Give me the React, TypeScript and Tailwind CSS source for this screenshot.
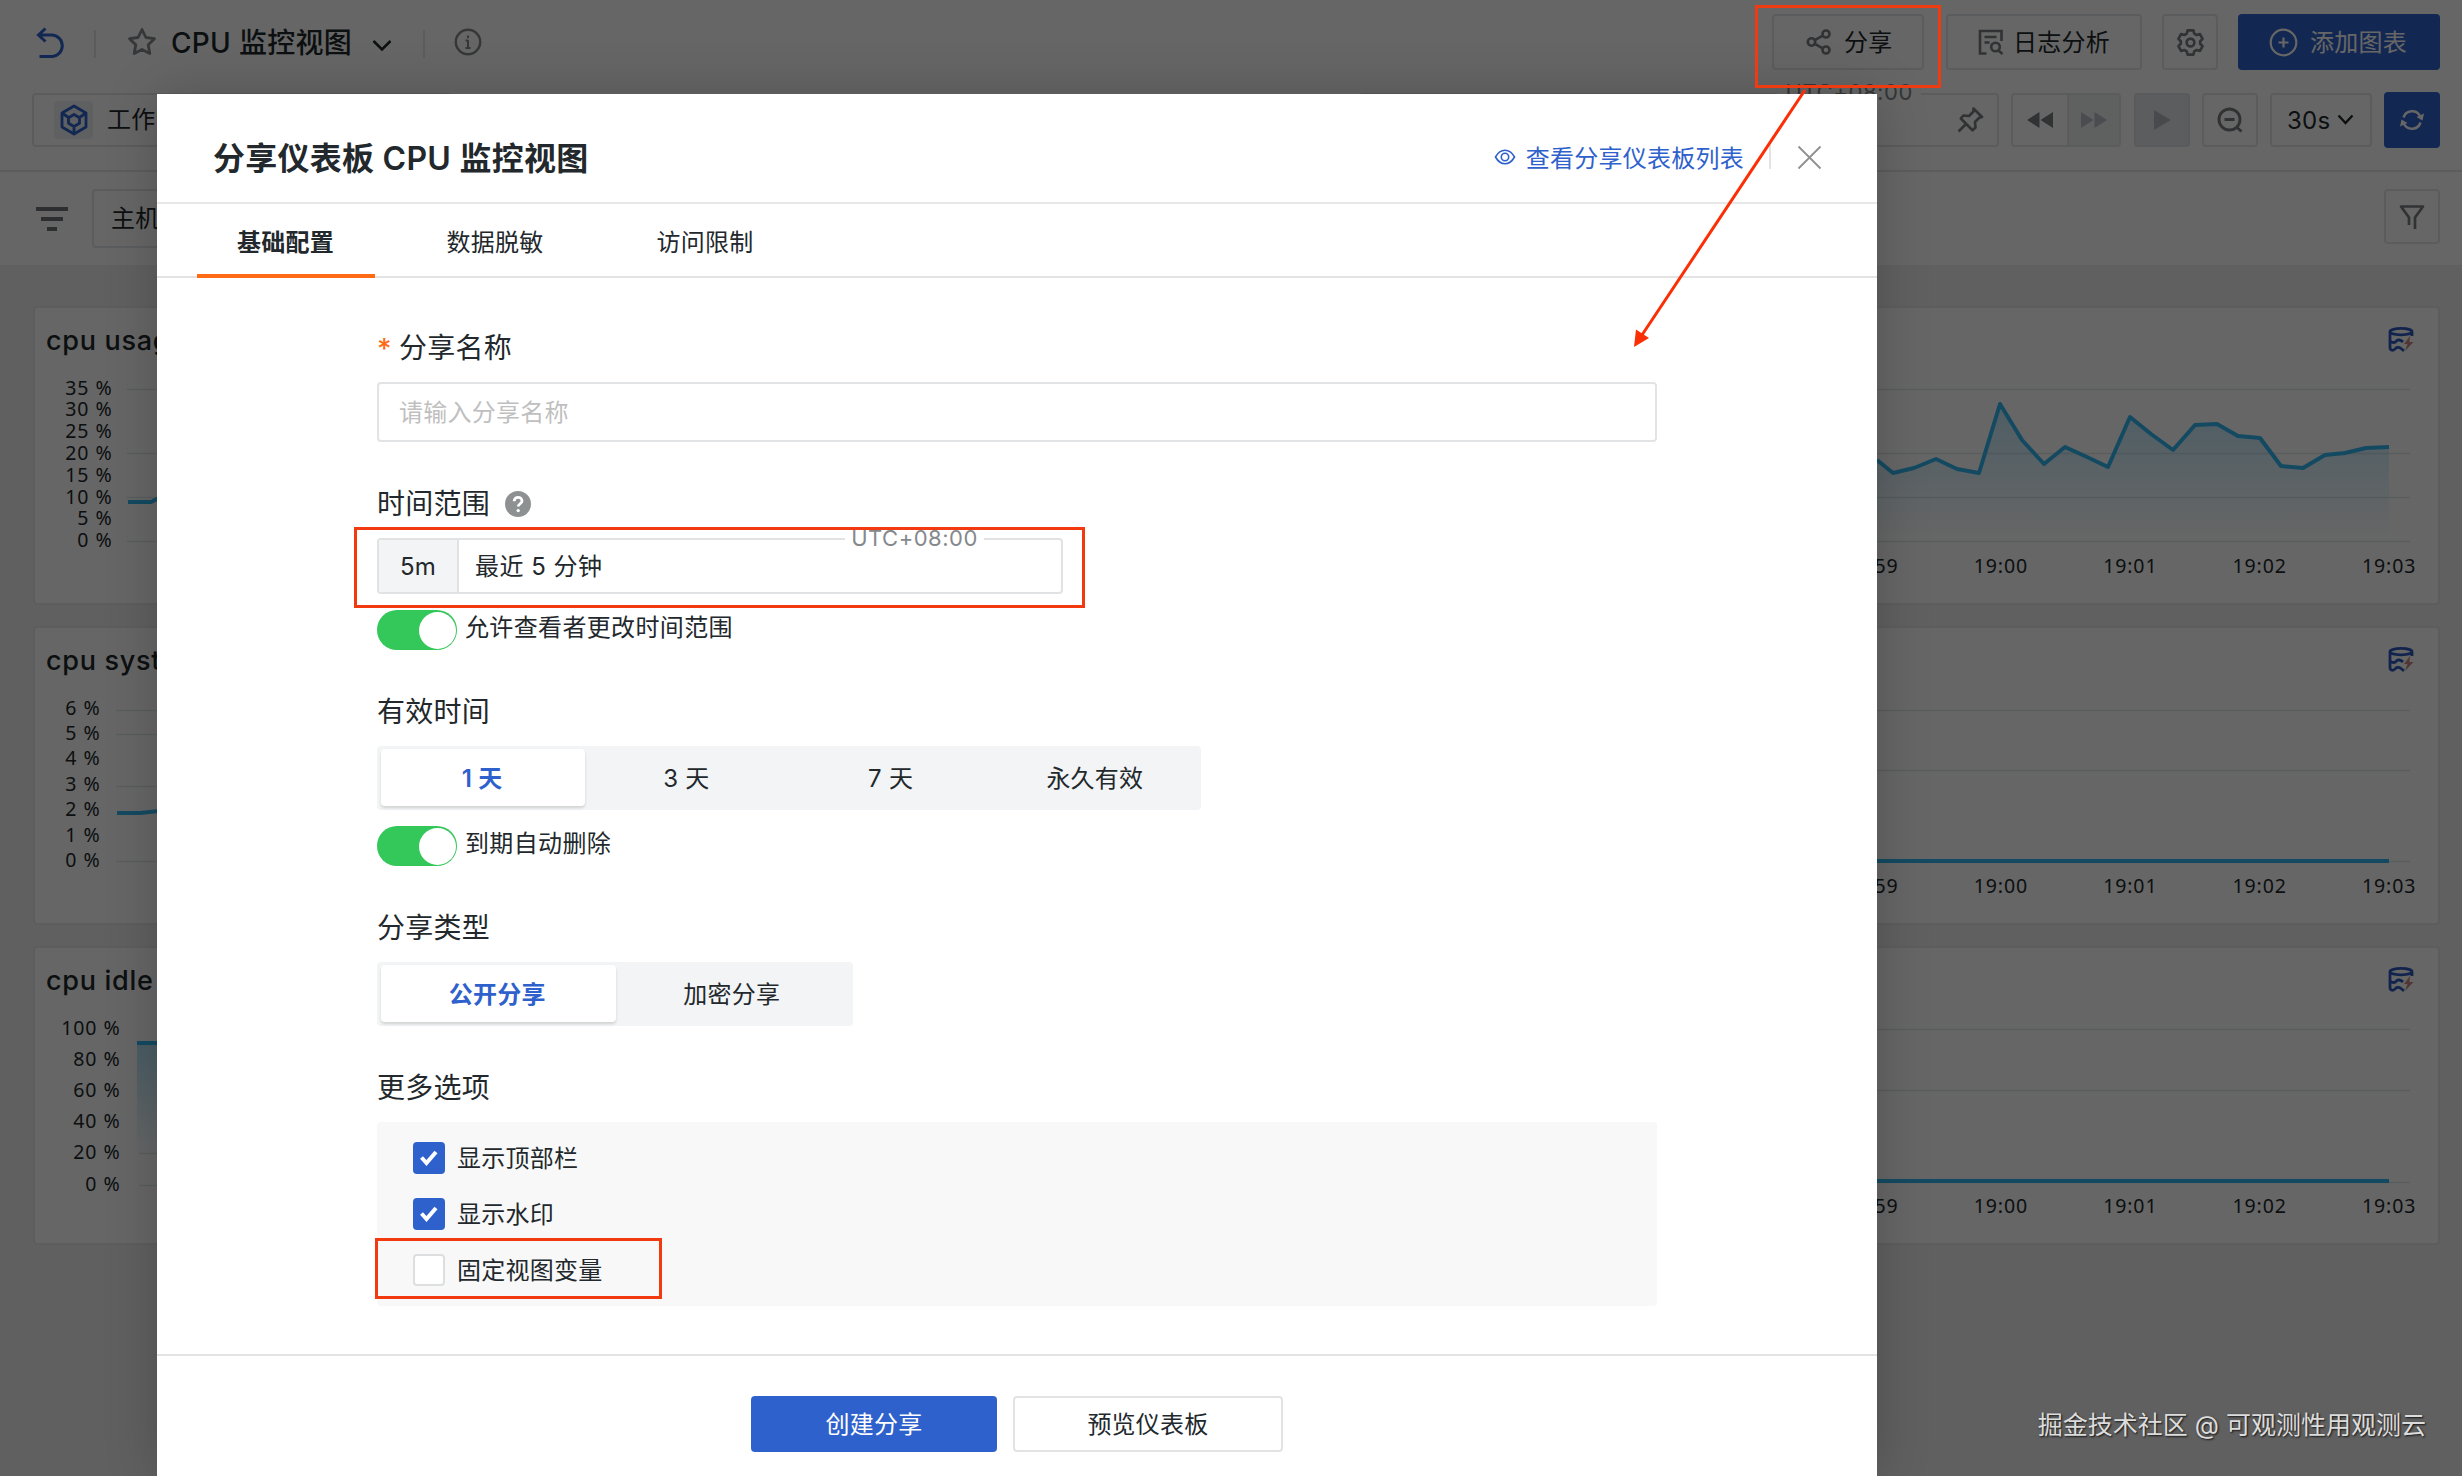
import { useState } from 'react'
import type { ReactNode } from 'react'

const LINE = '#34b8f2'

const usagePoints = [
  [629, 153], [645, 166], [666, 161], [688, 152], [709, 162], [731, 166], [752, 97], [774, 133], [796, 157],
  [817, 140], [839, 150], [860, 160], [882, 110], [903, 127], [925, 143], [947, 118], [969, 117], [990, 129],
  [1012, 131], [1033, 159], [1055, 161], [1077, 148], [1097, 146], [1118, 141], [1141, 140],
]

const leftCards = [
  {
    title: 'cpu usage',
    labels: ['35 %', '30 %', '25 %', '20 %', '15 %', '10 %', '5 %', '0 %'],
    top: 80.5, step: 21.8, right: 78.5, gridX: 93, grid: [82.5, 146.5, 190.5, 234.5],
    line: '94,195 117,195 125,191 170,180', area: false,
  },
  {
    title: 'cpu system',
    labels: ['6 %', '5 %', '4 %', '3 %', '2 %', '1 %', '0 %'],
    top: 80.5, step: 25.4, right: 66.5, gridX: 82, grid: [83.5, 107.5, 159.5, 234.5],
    line: '83,186 106,186 125,184 170,185', area: false,
  },
  {
    title: 'cpu idle',
    labels: ['100 %', '80 %', '60 %', '40 %', '20 %', '0 %'],
    top: 80.5, step: 31.2, right: 86.5, gridX: 105, grid: [206.5, 238.5],
    line: '103,96 170,96', area: true,
  },
]

const rightCards = [
  { grid: [82.5, 146.5, 190.5, 234.5], points: usagePoints },
  { grid: [83.5, 143.5, 234.5], points: [[500, 234], [1141, 234]] },
  { grid: [82.5, 143.5, 235.5], points: [[500, 234], [1141, 234]] },
]

const timeTicks = ['18:59', '19:00', '19:01', '19:02', '19:03']

function DbIcon() {
  return (
    <svg className="absolute left-[1136px] top-[19px]" width="26" height="26" viewBox="0 0 26 26" fill="none" stroke="#2f5bc0" strokeWidth="2.800">
      <ellipse cx="13" cy="4.6" rx="11" ry="3.2" />
      <path d="M2 5v15.5c0 3 3.5 3.500 5 1.500s4-2 6-.5l3 2.300" />
      <path d="M2 14c3 2.500 5.500 1.500 6.500 0s4-1.500 6.500 1M24 5v4" />
      <path d="M22 9l-6 8h3.500l-2.500 7 8.500-9h-4z" fill="#c98a80" stroke="none" />
    </svg>
  )
}

function LeftCard({ card, id }: { card: (typeof leftCards)[number]; id: string }) {
  return (
    <div className="h-[299px] bg-white border-2 border-[#e6e8ea] rounded-sm overflow-hidden">
      <svg width="1187" height="295" viewBox="1 1 1187 295" fill="none">
        <defs>
          <linearGradient id={id} x1="0" y1="0" x2="0" y2="1">
            <stop offset="0" stopColor={LINE} stopOpacity="0.35" />
            <stop offset="1" stopColor={LINE} stopOpacity="0" />
          </linearGradient>
        </defs>
        <text x="12" y="43" fontSize="27" fontWeight="500" letterSpacing="0.7" fill="#22282c">{card.title}</text>
        {card.grid.map((y) => (
          <path key={y} d={`M${card.gridX} ${y}H1160`} stroke="#e4e6e8" strokeWidth="1.5" />
        ))}
        {card.labels.map((label, i) => (
          <text
            key={label}
            x={card.right}
            y={card.top + i * card.step + 7}
            textAnchor="end"
            fontSize="19.500"
            letterSpacing="0.9"
            fill="#22282c"
            className="font-['Noto_Sans']"
          >
            {label}
          </text>
        ))}
        {card.area && <path d="M103 96H170V210H103Z" fill={`url(#${id})`} />}
        <polyline points={card.line} stroke={LINE} strokeWidth="4" />
      </svg>
    </div>
  )
}

function RightCard({ card, id }: { card: (typeof rightCards)[number]; id: string }) {
  const pts = card.points.map((p) => p.join(',')).join(' ')
  return (
    <div className="relative h-[299px] bg-white border-2 border-[#e6e8ea] rounded-sm overflow-hidden">
      <DbIcon />
      <svg width="1187" height="295" viewBox="4 1 1187 295" fill="none">
        <defs>
          <linearGradient id={id} gradientUnits="userSpaceOnUse" x1="0" y1="97" x2="0" y2="234">
            <stop offset="0" stopColor={LINE} stopOpacity="0.3" />
            <stop offset="0.7" stopColor={LINE} stopOpacity="0.08" />
            <stop offset="1" stopColor={LINE} stopOpacity="0" />
          </linearGradient>
        </defs>
        {card.grid.map((y) => (
          <path key={y} d={`M60 ${y}H1162`} stroke="#e4e6e8" strokeWidth="1.5" />
        ))}
        <polygon points={`${pts} 1141,234 629,234`} fill={`url(#${id})`} />
        <polyline points={pts} stroke={LINE} strokeWidth="4" strokeLinejoin="round" />
        {timeTicks.map((t, i) => (
          <text
            key={t}
            x={623.5 + i * 129.4}
            y={266}
            textAnchor="middle"
            fontSize="19.500"
            letterSpacing="0.9"
            fill="#22282c"
            className="font-['Noto_Sans']"
          >
            {t}
          </text>
        ))}
      </svg>
    </div>
  )
}

function Header() {
  return (
    <header className="h-[172px] bg-white border-b-2 border-[#e2e5e8] shrink-0">
      <div className="flex items-center justify-between h-[84px] pl-[36px] pr-[22px]">
        <div className="flex items-center">
          <svg className="mt-0.5" width="30" height="32" viewBox="0 0 30 32" fill="none" stroke="#2f61cc" strokeWidth="3">
            <path d="M9.500 1.500L2.500 8l7 6.500M3 8h13.500a10.800 10.800 0 0 1 0 21.500H3.500" />
          </svg>
          <div className="w-0.5 h-7 mt-1 bg-[#e2e5e8] ml-[28px]" />
          <svg className="ml-[31px]" width="30" height="30" viewBox="0 0 30 30" fill="none" stroke="#85898c" strokeWidth="2.800" strokeLinejoin="round">
            <path d="M15 2.500l3.900 8 8.600 1.200-6.300 6.100 1.600 8.700-7.800-4.100-7.800 4.100 1.600-8.700-6.300-6.100 8.600-1.200z" />
          </svg>
          <span className="ml-[14px] w-[181px] pt-0.5 text-[28px] font-medium tracking-[0.3px] text-[#22282c] whitespace-nowrap">CPU 监控视图</span>
          <svg className="ml-[20px] mt-2" width="20" height="14" viewBox="0 0 20 14" fill="none" stroke="#22282c" strokeWidth="2.600">
            <path d="M1.500 2l8.500 8.500L18.500 2" />
          </svg>
          <div className="w-0.5 h-7 mt-1 bg-[#e2e5e8] ml-[31px]" />
          <svg className="ml-[29px]" width="28" height="28" viewBox="0 0 28 28" fill="none" stroke="#85898c" strokeWidth="2.400">
            <circle cx="14" cy="14" r="12.200" />
            <path d="M14 12v8M14 7.500v2.800M11.500 12.500H14M11.500 20h5" strokeWidth="2" />
          </svg>
        </div>
        <div className="flex items-center text-2xl text-[#22282c]">
          <div className="flex items-center w-[152px] h-[56px] pl-[32px] border-2 border-[#e2e5e8] rounded-sm">
            <svg width="26" height="26" viewBox="0 0 26 26" fill="none" stroke="#7a7e81" strokeWidth="2.600">
              <circle cx="5.500" cy="13" r="3.700" />
              <circle cx="20" cy="5" r="3.500" />
              <circle cx="20" cy="21" r="3.500" />
              <path d="M8.800 11.200l8-4.500M8.800 14.800l8 4.500" />
            </svg>
            <span className="ml-[12px] pt-0.5">分享</span>
          </div>
          <div className="flex items-center w-[196px] h-[56px] ml-[22px] pl-[30px] border-2 border-[#e2e5e8] rounded-sm">
            <svg width="26" height="26" viewBox="0 0 26 26" fill="none" stroke="#7a7e81" strokeWidth="2.600">
              <path d="M8.500 24.500H2V2h21.500v10M6.500 8h12M6.500 13.500h5" />
              <circle cx="17.500" cy="18" r="4.300" />
              <path d="M20.500 21.500l4 3.500" />
            </svg>
            <span className="ml-[9px] pt-0.5 whitespace-nowrap">日志分析</span>
          </div>
          <div className="flex items-center justify-center w-[56px] h-[56px] ml-[20px] border-2 border-[#e2e5e8] rounded-sm">
            <svg width="29" height="29" viewBox="0 0 24 24" fill="none" stroke="#7a7e81" strokeWidth="2.200" strokeLinejoin="round">
              <path d="M9.600 2h4.800l.7 2.700 2 1.100 2.700-.8 2.200 4-2 2v2l2 2-2.200 4-2.700-.8-2 1.100-.7 2.700H9.600l-.7-2.700-2-1.100-2.700.8-2.200-4 2-2v-2l-2-2 2.200-4 2.700.8 2-1.100z" />
              <circle cx="12" cy="12" r="3.200" />
            </svg>
          </div>
          <div className="flex items-center w-[202px] h-[56px] ml-[20px] pl-[31px] bg-[#2f61cc] text-white rounded">
            <svg width="29" height="29" viewBox="0 0 29 29" fill="none" stroke="white" strokeWidth="2.200">
              <circle cx="14.500" cy="14.500" r="12.800" />
              <path d="M14.500 9.500v10M9.500 14.500h10" />
            </svg>
            <span className="ml-[12px] pt-0.5">添加图表</span>
          </div>
        </div>
      </div>

      <div className="flex items-center justify-between h-[72px] pl-[32px] pr-[22px] text-2xl text-[#22282c]">
        <div className="flex items-center w-[420px] h-[54px] pl-[20px] border-2 border-[#e2e5e8] rounded">
          <div className="flex items-center justify-center w-[39px] h-[38px] bg-[#eef1f5] rounded-sm">
            <svg width="30" height="32" viewBox="0 0 30 32" fill="none" stroke="#2f61cc" strokeWidth="2.800" strokeLinejoin="round">
              <path d="M15 2l12 7v14l-12 7-12-7V9z" />
              <path d="M15 10.500l5.500 3.200v5.500L15 22.500l-5.500-3.300v-5.500zM3 9l6.500 4.500M27 9l-6.500 4.500M15 22.500V30" />
            </svg>
          </div>
          <span className="ml-[14px]">工作空间</span>
        </div>
        <div className="flex items-center">
          <div className="relative flex items-center justify-end w-[640px] h-[54px] pr-[13px] mr-px border-2 border-[#e2e5e8] rounded">
            <span className="absolute right-[76px] -top-[19px] px-2 bg-white text-[22px] leading-8 tracking-[0.6px] text-[#85898c]">UTC+08:00</span>
            <svg width="28" height="28" viewBox="0 0 28 28" fill="none" stroke="#7a7e81" strokeWidth="2.700" strokeLinejoin="round">
              <path d="M17.500 2.500l8.500 8.500-2.800.8-4.200 4.200.5 5.500-3 2.800L4.800 12.500l2.500-3 5.700.5 4.500-4.500zM10 18l-7.500 7.500" />
            </svg>
          </div>
          <div className="flex w-[110px] h-[54px] ml-[11px] mr-px border-2 border-[#e2e5e8] rounded overflow-hidden">
            <div className="flex items-center justify-center w-[54px]">
              <svg width="26" height="16" viewBox="0 0 26 16" fill="#7a7e81"><path d="M12.500 0v16L0 8zM26 0v16L13.500 8z" /></svg>
            </div>
            <div className="flex items-center justify-center flex-1 bg-[#edeff1] border-l-2 border-[#e2e5e8]">
              <svg width="26" height="16" viewBox="0 0 26 16" fill="#b8bec6"><path d="M0 0v16l12.500-8zM13.500 0v16L26 8z" /></svg>
            </div>
          </div>
          <div className="flex items-center justify-center w-[56px] h-[54px] ml-[12px] bg-[#e6e8ea] border-2 border-[#dfe2e5] rounded">
            <svg width="17" height="20" viewBox="0 0 17 20" fill="#b4bac4"><path d="M0 0v20l17-10z" /></svg>
          </div>
          <div className="flex items-center justify-center w-[56px] h-[54px] ml-[12px] border-2 border-[#e2e5e8] rounded">
            <svg width="26" height="26" viewBox="0 0 26 26" fill="none" stroke="#7a7e81" strokeWidth="2.900">
              <circle cx="12.500" cy="12.500" r="10.500" />
              <path d="M7.500 12.500h10M19.500 20l5 4.500" />
            </svg>
          </div>
          <div className="flex items-center w-[102px] h-[54px] ml-[12px] pl-[15px] border-2 border-[#e2e5e8] rounded">
            <span className="w-[50px] pt-0.5">30s</span>
            <svg width="17" height="12" viewBox="0 0 17 12" fill="none" stroke="#22282c" strokeWidth="2.400"><path d="M1.500 1.500l7 7.500 7-7.500" /></svg>
          </div>
          <div className="flex items-center justify-center w-[56px] h-[56px] ml-[12px] bg-[#2f61cc] rounded">
            <svg width="26" height="26" viewBox="0 0 26 26" fill="none" stroke="white" strokeWidth="2.500">
              <path d="M4.500 10.500a9 9 0 0 1 16.500-1.500M21.500 15.500a9 9 0 0 1-16.500 1.500" />
              <path d="M25 6.500l-1.500 7-6-3.500zM1 19.500l1.500-7 6 3.500z" fill="white" stroke="none" />
            </svg>
          </div>
        </div>
      </div>
    </header>
  )
}

function FilterBar() {
  return (
    <div className="flex items-center justify-between h-[93px] pl-[36px] pr-[22px] bg-white shrink-0">
      <div className="flex items-center">
        <svg width="32" height="24" viewBox="0 0 32 24" fill="#6f7376"><path d="M0 0h32v4H0zM5 10h22v4H5zM11 20h10v4H11z" /></svg>
        <div className="flex items-center w-[300px] h-[59px] ml-[24px] pl-[17px] border-2 border-[#e2e5e8] rounded text-2xl text-[#22282c]">主机</div>
      </div>
      <div className="flex items-center justify-center w-[56px] h-[55px] mb-1 border-2 border-[#e2e5e8] rounded">
        <svg width="26" height="26" viewBox="0 0 26 26" fill="none" stroke="#7a7e81" strokeWidth="2.700" strokeLinejoin="round">
          <path d="M10 21V13.500L2 2.500h22l-8 11V25" />
        </svg>
      </div>
    </div>
  )
}

function Toggle({ label }: { label: string }) {
  return (
    <div className="flex h-10 mt-4">
      <div className="flex justify-end w-20 h-10 p-[1.500px] bg-[#34c759] rounded-full">
        <div className="size-[37px] bg-white rounded-full" />
      </div>
      <span className="ml-[8px] text-2xl leading-9 tracking-[0.35px]">{label}</span>
    </div>
  )
}

function FieldLabel({ children, first }: { children: ReactNode; first?: boolean }) {
  return (
    <div className={first ? 'flex items-center h-10 mt-[49px] pt-px text-[28px]' : 'flex items-center h-10 mt-[41px] pt-px text-[28px]'}>
      {children}
    </div>
  )
}

function Segmented({ items, wide }: { items: string[]; wide?: boolean }) {
  const [active, setActive] = useState(items[0])
  return (
    <div className="inline-flex h-16 mt-[15px] pl-1 pr-[3px] pt-[3px] pb-1 bg-[#f2f4f5] rounded-sm text-2xl">
      {items.map((item) => (
        <button
          key={item}
          onClick={() => setActive(item)}
          className={[
            'flex items-center justify-center pt-0.5 pr-0.5 rounded',
            wide ? 'w-[234.500px]' : 'w-[204.250px]',
            item === active ? 'bg-white font-semibold text-[#2f61cc] shadow-[0_2px_3px_rgba(0,0,0,0.14)]' : '',
          ].join(' ')}
        >
          {item}
        </button>
      ))}
    </div>
  )
}

function Option({ label, checked }: { label: string; checked?: boolean }) {
  return (
    <div className="flex items-center h-8 text-2xl">
      {checked ? (
        <div className="flex items-center justify-center size-8 bg-[#2f61cc] rounded">
          <svg width="18" height="16" viewBox="0 0 18 16" fill="none" stroke="white" strokeWidth="4"><path d="M1.500 7.500l5 5.500L16 2" /></svg>
        </div>
      ) : (
        <div className="size-8 bg-white border-2 border-[#dcdee0] rounded" />
      )}
      <span className="ml-[12px] pt-0.5">{label}</span>
    </div>
  )
}

function ShareModal() {
  return (
    <div className="absolute left-[157px] top-[94px] w-[1720px] h-[1382px] bg-white text-[#22282c] shadow-[0_0_50px_rgba(0,0,0,0.2)]">
      <div className="flex items-center justify-between h-[110px] pt-[22px] pl-[56px] pr-[55px] border-b-2 border-[#e8e8e8]">
        <h1 className="text-[32px] font-semibold tracking-[0.25px] whitespace-nowrap">分享仪表板 CPU 监控视图</h1>
        <div className="flex items-center -mt-1">
          <svg width="22" height="16" viewBox="0 0 22 16" fill="none" stroke="#2f61cc" strokeWidth="1.600">
            <path d="M1.500 8C4 3.500 7 1.300 11 1.300S18 3.500 20.500 8C18 12.500 15 14.700 11 14.700S4 12.500 1.500 8z" />
            <circle cx="11" cy="8" r="3.700" />
          </svg>
          <span className="ml-[10px] pt-1 text-2xl text-[#2f61cc]">查看分享仪表板列表</span>
          <div className="w-0.5 h-6 ml-[25px] bg-[#e4e4e4]" />
          <svg className="ml-[26px]" width="25" height="25" viewBox="0 0 25 25" stroke="#909090" strokeWidth="1.800"><path d="M1.500 1.500l22 22M23.500 1.500l-22 22" /></svg>
        </div>
      </div>

      <div className="flex h-[74px] pl-[40px] gap-[32px] text-2xl border-b-2 border-[#e3e3e3]">
        <div className="flex items-center justify-center w-[178px] h-[74px] pt-[7px] pr-px border-b-4 border-[#ff6a14] font-semibold">基础配置</div>
        <div className="flex items-center justify-center w-[178px] h-[74px] pt-1 pr-0.5">数据脱敏</div>
        <div className="flex items-center justify-center w-[178px] h-[74px] pt-1 pr-0.5">访问限制</div>
      </div>

      <div className="flex flex-col items-start h-[1078px] px-[220px] border-b-2 border-[#e3e3e3]">
        <FieldLabel first>
          <span className="w-[22px] pt-0.5 font-medium text-[#ff6a14]">*</span>分享名称
        </FieldLabel>
        <div className="flex items-center w-[1280px] h-[60px] mt-[15px] pl-[20px] pt-0.5 border-2 border-[#e2e3e4] rounded-sm text-2xl text-[#bfbfbf]">
          请输入分享名称
        </div>

        <FieldLabel>
          时间范围
          <svg className="ml-[15px]" width="26" height="26" viewBox="0 0 26 26">
            <circle cx="13" cy="13" r="13" fill="#8e9192" />
            <path d="M9.200 10.200c0-5 7.800-5 7.800-.3 0 2.700-3.800 3-3.800 5.700" fill="none" stroke="white" strokeWidth="2.800" />
            <circle cx="13.200" cy="19.600" r="1.700" fill="white" />
          </svg>
        </FieldLabel>
        <div className="relative flex items-center w-[686px] h-[56px] mt-[15px] border-2 border-[#e0e2e4] rounded text-2xl">
          <div className="flex items-center justify-center w-[80px] h-full pt-0.5 bg-[#f2f4f5] border-r-2 border-[#e0e2e4]">5m</div>
          <span className="ml-[16px] pt-0.5 tracking-[0.5px]">最近 5 分钟</span>
          <span className="absolute left-[466px] -top-[21px] w-[139px] bg-white text-center text-[22px] leading-[38px] tracking-[0.5px] text-[#85898c]">UTC+08:00</span>
        </div>
        <Toggle label="允许查看者更改时间范围" />

        <FieldLabel>有效时间</FieldLabel>
        <Segmented items={['1 天', '3 天', '7 天', '永久有效']} />
        <Toggle label="到期自动删除" />

        <FieldLabel>分享类型</FieldLabel>
        <Segmented items={['公开分享', '加密分享']} wide />

        <FieldLabel>更多选项</FieldLabel>
        <div className="flex flex-col gap-6 w-[1280px] h-[184px] mt-[15px] pt-5 pl-[36px] bg-[#f8f8f8] rounded-sm">
          <Option label="显示顶部栏" checked />
          <Option label="显示水印" checked />
          <Option label="固定视图变量" />
        </div>
      </div>

      <div className="flex gap-4 pl-[594px] pt-[40px] text-2xl">
        <button className="w-[246px] h-[56px] pt-0.5 bg-[#2f61cc] text-white rounded">创建分享</button>
        <button className="w-[270px] h-[56px] pt-0.5 border-2 border-[#e2e3e4] rounded">预览仪表板</button>
      </div>
    </div>
  )
}

export default function App() {
  return (
    <div className="relative flex flex-col w-[2462px] h-[1476px] overflow-hidden bg-[#f1f1f1] font-['Inter','Noto_Sans_CJK_SC',sans-serif] tracking-[0.25px]">
      <Header />
      <FilterBar />
      <main className="grid grid-cols-2 gap-x-[26px] gap-y-[21px] pt-[41px] pl-[33px] pr-[22px]">
        {leftCards.map((card, i) => [
          <LeftCard key={`l${i}`} card={card} id={`fill-l${i}`} />,
          <RightCard key={`r${i}`} card={rightCards[i]} id={`fill-r${i}`} />,
        ])}
      </main>

      <div className="absolute inset-0 bg-black/60" />
      <ShareModal />

      {/* annotations over the page */}
      <div className="absolute left-[1755px] top-[5px] w-[186px] h-[83px] border-[3px] border-[#ee3b12]" />
      <div className="absolute left-[354px] top-[527px] w-[731px] h-[81px] border-[3px] border-[#f2390f]" />
      <div className="absolute left-[375px] top-[1238px] w-[287px] h-[61px] border-[3px] border-[#f2390f]" />
      <svg className="absolute left-[1620px] top-[80px]" width="200" height="280" viewBox="1620 80 200 280">
        <path d="M1805 90L1640 338" stroke="#fb2f06" strokeWidth="3" />
        <path d="M1634 347l2-17.500 13 8.500z" fill="#fb2f06" />
      </svg>
      <div className="absolute right-[36px] bottom-[33px] text-[25px] leading-9 tracking-normal text-[#dcdcdc] whitespace-nowrap [text-shadow:1px_1px_2px_rgba(0,0,0,0.8)]">
        掘金技术社区 @ 可观测性用观测云
      </div>
    </div>
  )
}
